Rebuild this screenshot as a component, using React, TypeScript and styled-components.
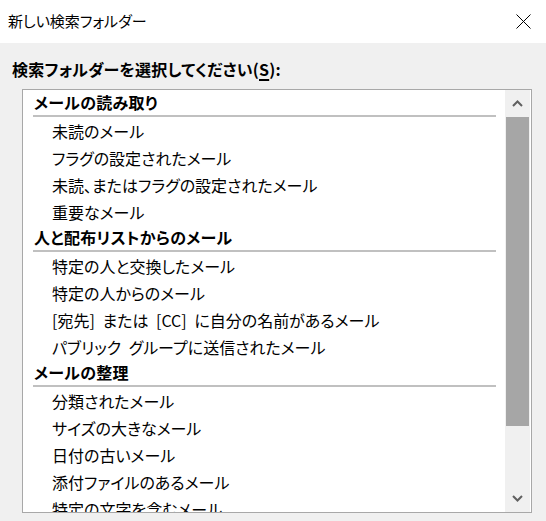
import React from "react";
import styled, { createGlobalStyle } from "styled-components";

const Global = createGlobalStyle`
  html, body { margin: 0; padding: 0; background: #f0f0f0; }
  body { font-family: "Noto Sans CJK JP", "Noto Sans", sans-serif; }
  * { box-sizing: border-box; }
`;

const Window = styled.div`
  width: 546px;
  height: 521px;
  display: flex;
  flex-direction: column;
  overflow: hidden;
  font-feature-settings: "palt";
  color: #000;
`;

const TitleBar = styled.div`
  height: 43px;
  background: #fff;
  display: flex;
  align-items: center;
  justify-content: space-between;
  padding: 0 15px 0 8px;
  flex-shrink: 0;
`;

const Title = styled.div`
  font-size: 15px;
  line-height: 20px;
  margin-top: -1px;
`;

const CloseButton = styled.div`
  width: 15px;
  height: 15px;
  display: flex;
`;

const Body = styled.div`
  flex: 1;
  background: #f0f0f0;
  padding: 15px 15px 0 12px;
  display: flex;
  flex-direction: column;
  min-height: 0;
`;

const Label = styled.div`
  font-size: 16px;
  font-weight: bold;
  line-height: 22px;
  height: 31px;
  letter-spacing: 0.2px;
  u { text-decoration-thickness: 1.5px; text-underline-offset: 3px; }
`;

const ListBox = styled.div`
  margin-left: 10px;
  width: 510px;
  height: 424px;
  border: 1px solid #a8a8a8;
  background: #fff;
  display: flex;
  padding: 0 1px 0 0;
  flex-shrink: 0;
`;

const ListContent = styled.div`
  flex: 1;
  overflow: hidden;
  padding: 0 9px 0 10px;
`;

const Row = styled.div<{ $header?: boolean }>`
  height: 27px;
  display: flex;
  align-items: center;
  font-size: 16px;
  white-space: pre;
  word-spacing: 4px;
  line-height: 22px;
  padding-left: ${(p) => (p.$header ? "1px" : "19px")};
  font-weight: ${(p) => (p.$header ? "bold" : "normal")};
  ${(p) =>
    p.$header
      ? `border-bottom: 2.5px solid #c0c0c0; align-items: flex-start; padding-top: 1px; letter-spacing: 0.3px;`
      : ``}
`;

const ScrollBar = styled.div`
  width: 25px;
  display: flex;
  flex-direction: column;
  background: #f0f0f0;
`;

const ArrowButton = styled.div`
  height: 27px;
  display: flex;
  align-items: center;
  justify-content: center;
  flex-shrink: 0;
`;

const Track = styled.div`
  flex: 1;
  display: flex;
  flex-direction: column;
`;

const Thumb = styled.div`
  height: 309px;
  margin: 0 1px;
  background: #a6a6a6;
`;

const Chevron = ({ up }: { up?: boolean }) => (
  <svg width="11" height="7" viewBox="0 0 11 7">
    <path
      d={up ? "M1 6 L5.5 1.5 L10 6" : "M1 1 L5.5 5.5 L10 1"}
      fill="none"
      stroke="#606060"
      strokeWidth="2"
    />
  </svg>
);

type Item = { text: React.ReactNode; header?: boolean };

const items: Item[] = [
  { text: "メールの読み取り", header: true },
  { text: "未読のメール" },
  { text: "フラグの設定されたメール" },
  { text: "未読、またはフラグの設定されたメール" },
  { text: "重要なメール" },
  { text: "人と配布リストからのメール", header: true },
  { text: "特定の人と交換したメール" },
  { text: "特定の人からのメール" },
  { text: "[宛先] または [CC] に自分の名前があるメール" },
  { text: "パブリック グループに送信されたメール" },
  { text: "メールの整理", header: true },
  { text: "分類されたメール" },
  { text: "サイズの大きなメール" },
  { text: "日付の古いメール" },
  { text: "添付ファイルのあるメール" },
  { text: "特定の文字を含むメール" },
];

export default function App() {
  return (
    <>
      <Global />
      <Window>
        <TitleBar>
          <Title>新しい検索フォルダー</Title>
          <CloseButton>
            <svg width="15" height="15" viewBox="0 0 15 15">
              <path d="M0.5 0.5 L14.5 14.5 M14.5 0.5 L0.5 14.5" stroke="#000" strokeWidth="1" fill="none" />
            </svg>
          </CloseButton>
        </TitleBar>
        <Body>
          <Label>
            検索フォルダーを選択してください(<u>S</u>):
          </Label>
          <ListBox>
            <ListContent>
              {items.map((it, i) => (
                <Row key={i} $header={it.header}>
                  {it.text}
                </Row>
              ))}
            </ListContent>
            <ScrollBar>
              <ArrowButton>
                <Chevron up />
              </ArrowButton>
              <Track>
                <Thumb />
              </Track>
              <ArrowButton>
                <Chevron />
              </ArrowButton>
            </ScrollBar>
          </ListBox>
        </Body>
      </Window>
    </>
  );
}
